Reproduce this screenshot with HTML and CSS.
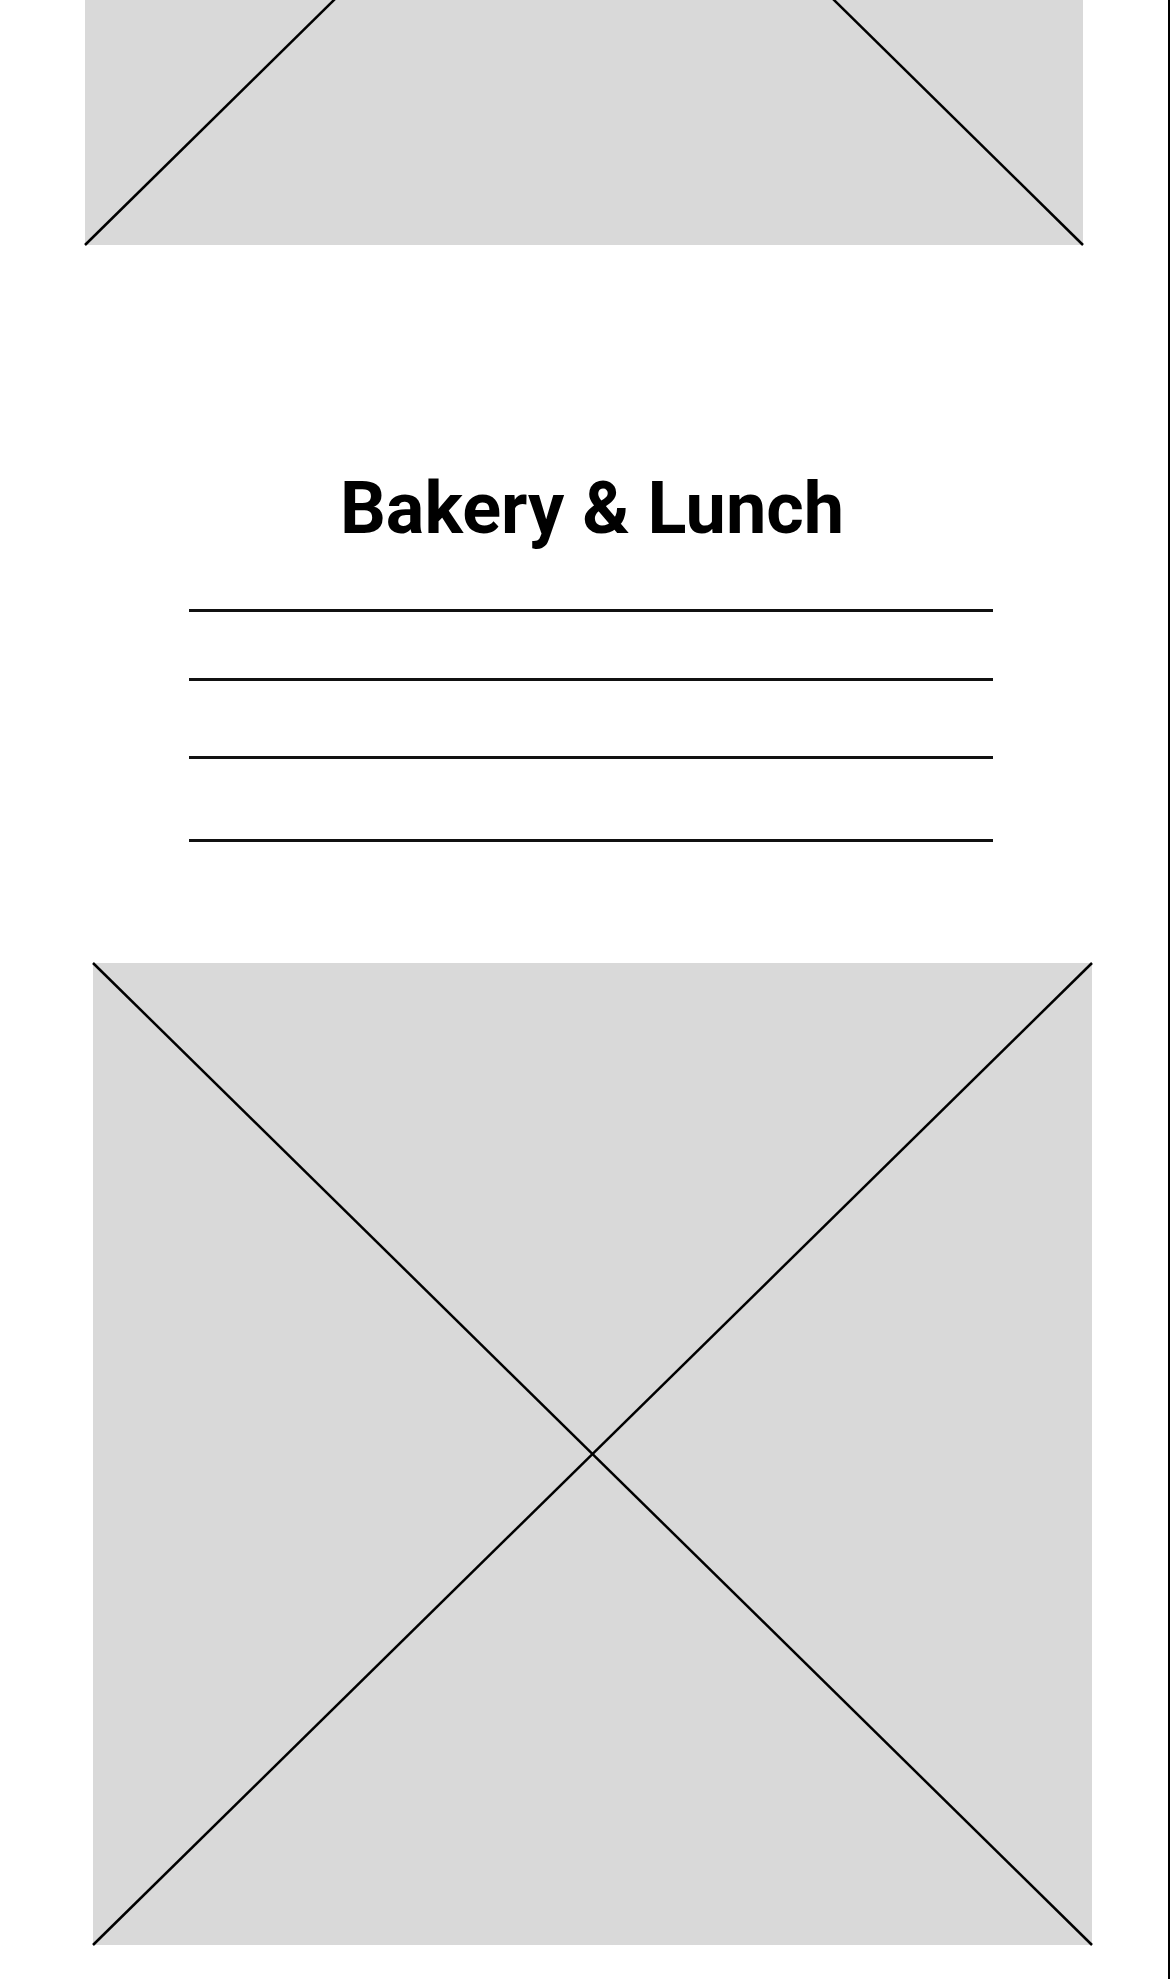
FILE: index.html
```html
<!DOCTYPE html>
<html lang="en">
	<head>

		<meta charset="UTF-8">
		<title>Bakery &amp; Lunch</title>

		<link rel="stylesheet" href="styles.css">

	</head>
	<body>

		<div class="page">

			<!-- placeholder image, page is scrolled so only its bottom shows -->
			<div class="placeholder placeholder-top">
				<svg viewBox="0 0 100 100" preserveAspectRatio="none">
					<line x1="0" y1="0" x2="100" y2="100" />
					<line x1="100" y1="0" x2="0" y2="100" />
				</svg>
			</div>

			<h1 class="title">Bakery &amp; Lunch</h1>

			<!-- text lines -->
			<div class="text-lines">
				<div class="text-line first"></div>
				<div class="text-line second"></div>
				<div class="text-line third"></div>
				<div class="text-line fourth"></div>
			</div>

			<div class="placeholder placeholder-bottom">
				<svg viewBox="0 0 100 100" preserveAspectRatio="none">
					<line x1="0" y1="0" x2="100" y2="100" />
					<line x1="100" y1="0" x2="0" y2="100" />
				</svg>
			</div>

		</div>

	</body>
</html>
```

FILE: styles.css
```css
/* all */
* {
	margin: 0;
	padding: 0;
	box-sizing: border-box;
}

html,
body {
	background-color: #fff;
	overflow: hidden;
}

body {
	font-family: Roboto, "Liberation Sans", sans-serif;
}

.page {
	display: flex;
	flex-direction: column;
	align-items: flex-start;

	width: 1170px;
	height: 1979px;

	/* right edge of the frame */
	border-right: 2px solid #000;
}

/* grey box with a cross */
.placeholder {
	background-color: #d9d9d9;
	flex-shrink: 0;
}

.placeholder svg {
	display: block;
	width: 100%;
	height: 100%;
	overflow: visible;
}

.placeholder line {
	stroke: #000;
	stroke-width: 2.5;
	vector-effect: non-scaling-stroke;
}

.placeholder-top {
	width: 998px;
	height: 982px;
	/* scrolled past the top */
	margin-top: -737px;
	margin-left: 85px;
}

.placeholder-bottom {
	width: 999px;
	height: 982px;
	margin-top: 121px;
	margin-left: 93px;
}

.title {
	align-self: stretch;
	margin-top: 228px;
	padding-left: 16px;

	font-size: 72px;
	font-weight: 700;
	line-height: 1;
	text-align: center;
	color: #000;
}

.text-lines {
	display: flex;
	flex-direction: column;
	margin-left: 189px;
}

.text-line {
	width: 804px;
	height: 3px;
	background-color: #111;
}

.text-line.first {
	margin-top: 64px;
}

.text-line.second {
	margin-top: 66px;
}

.text-line.third {
	margin-top: 75px;
}

.text-line.fourth {
	margin-top: 80px;
}
```
